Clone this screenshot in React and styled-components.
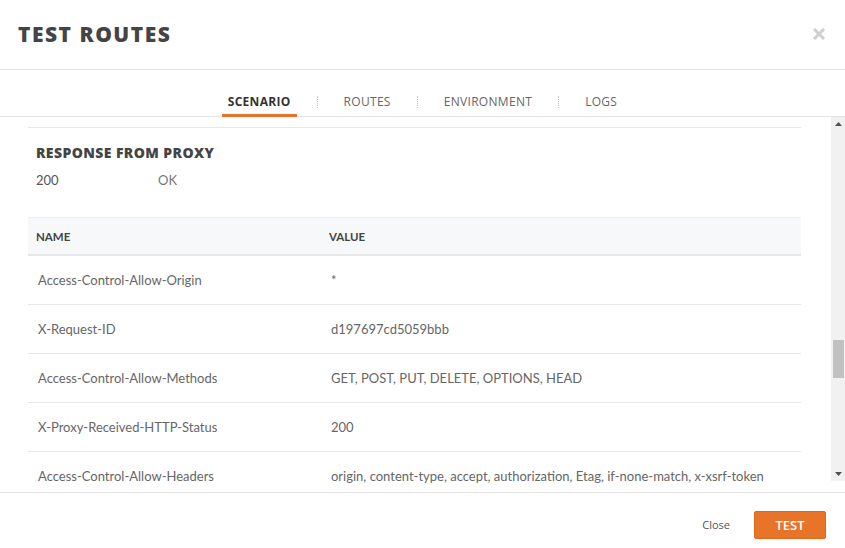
import React from 'react'
import styled, {createGlobalStyle} from 'styled-components'

const GlobalStyle = createGlobalStyle`
  * { box-sizing: border-box; }
  html, body { margin: 0; padding: 0; background: #fff; }
  body { font-family: Lato, "Open Sans", sans-serif; }
`

const tabs = ["Scenario", "Routes", "Environment", "Logs"]

const headers = [
  ["Access-Control-Allow-Origin", "*"],
  ["X-Request-ID", "d197697cd5059bbb"],
  ["Access-Control-Allow-Methods", "GET, POST, PUT, DELETE, OPTIONS, HEAD"],
  ["X-Proxy-Received-HTTP-Status", "200"],
  ["Access-Control-Allow-Headers", "origin, content-type, accept, authorization, Etag, if-none-match, x-xsrf-token"],
]

const App = () => {
  return (
    <Modal>
      <GlobalStyle />
      <Header>
        <Title>TEST ROUTES</Title>
        <CloseX>
          <svg width="12" height="12" viewBox="0 0 12 12">
            <path d="M2 2 L10 10 M10 2 L2 10" stroke="#cfcfcf" strokeWidth="3" strokeLinecap="square" />
          </svg>
        </CloseX>
      </Header>
      <Tabs>
        {tabs.map((t, i) => (
          <React.Fragment key={t}>
            {i > 0 && <TabSep />}
            <Tab active={i === 0}>{t}</Tab>
          </React.Fragment>
        ))}
      </Tabs>
      <Body>
        <Content>
          <PrevEnd />
          <SectionTitle>RESPONSE FROM PROXY</SectionTitle>
          <Status>
            <Code>200</Code>
            <span>OK</span>
          </Status>
          <Table>
            <HeadRow>
              <HeadCell>NAME</HeadCell>
              <HeadCell>VALUE</HeadCell>
            </HeadRow>
            {headers.map(([name, value]) => (
              <Row key={name}>
                <Cell>{name}</Cell>
                <Cell>{value}</Cell>
              </Row>
            ))}
          </Table>
        </Content>
        <Track>
          <Arrow>
            <svg width="7" height="4" viewBox="0 0 7 4"><path d="M0 4 L3.5 0 L7 4 Z" fill="#505050" /></svg>
          </Arrow>
          <Rail>
            <Thumb />
          </Rail>
          <Arrow>
            <svg width="7" height="4" viewBox="0 0 7 4"><path d="M0 0 L3.5 4 L7 0 Z" fill="#505050" /></svg>
          </Arrow>
        </Track>
      </Body>
      <Footer>
        <CloseBtn>Close</CloseBtn>
        <TestBtn>TEST</TestBtn>
      </Footer>
    </Modal>
  )
}

export default App

const Modal = styled.div`
  width: 845px;
  height: 548px;
  display: flex;
  flex-direction: column;
  overflow: hidden;
  background: #fff;
`
const Header = styled.div`
  height: 70px;
  flex-shrink: 0;
  display: flex;
  align-items: center;
  justify-content: space-between;
  padding: 0 20px 2px 18px;
  border-bottom: 1px solid #e4e4e4;
`
const Title = styled.h1`
  margin: 0;
  font-family: "Open Sans", sans-serif;
  font-weight: 800;
  font-size: 21px;
  letter-spacing: 1.5px;
  color: #444;
`
const CloseX = styled.div`
  display: flex;
`
const Tabs = styled.div`
  height: 47px;
  flex-shrink: 0;
  display: flex;
  justify-content: center;
  align-items: flex-end;
  border-bottom: 1px solid #e4e4e4;
`
const Tab = styled.div`
  font-family: "Open Sans", sans-serif;
  font-size: 12px;
  letter-spacing: 0.3px;
  font-weight: ${p => p.active ? 700 : 500};
  text-transform: uppercase;
  color: ${p => p.active ? '#333' : '#666'};
  padding: 0 6px 4px;
  border-bottom: 3px solid ${p => p.active ? '#e8722a' : 'transparent'};
  margin-bottom: -1px;
`
const TabSep = styled.div`
  width: 0;
  height: 12px;
  border-left: 1px dotted #c8c8c8;
  margin: 0 20px 8px;
`
const Body = styled.div`
  height: 376px;
  flex-shrink: 0;
  display: flex;
  border-bottom: 1px solid #e4e4e4;
`
const Content = styled.div`
  flex: 1;
  overflow: hidden;
  padding: 0 30px 0 28px;
`
const PrevEnd = styled.div`
  margin-top: 10px;
  border-top: 1px solid #e8e8e8;
`
const SectionTitle = styled.h2`
  margin: 16px 0 0 8px;
  font-family: "Open Sans", sans-serif;
  font-size: 14px;
  font-weight: 800;
  letter-spacing: 0.4px;
  color: #444;
  line-height: 18px;
`
const Status = styled.div`
  display: flex;
  margin: 10px 0 0 8px;
  font-size: 13px;
  color: #555;
  line-height: 16px;
  span { color: #777; }
`
const Code = styled.div`
  width: 122px;
`
const Table = styled.div`
  margin-top: 29px;
`
const HeadRow = styled.div`
  display: grid;
  grid-template-columns: 293px 1fr;
  height: 39px;
  align-items: center;
  background: #f7f8f9;
  border-top: 1px solid #eceeef;
  border-bottom: 2px solid #e6e8ea;
`
const HeadCell = styled.div`
  padding-left: 8px;
  font-size: 11.5px;
  font-weight: 700;
  color: #444;
`
const Row = styled.div`
  display: grid;
  grid-template-columns: 293px 1fr;
  height: 49px;
  align-items: center;
  border-bottom: 1px solid #e8e8e8;
`
const Cell = styled.div`
  padding-left: 10px;
  padding-top: 0px;
  font-size: 13px;
  color: #666;
  white-space: nowrap;
`
const Track = styled.div`
  width: 14px;
  height: 364px;
  background: #f1f1f1;
  display: flex;
  flex-direction: column;
`
const Arrow = styled.div`
  height: 14px;
  display: flex;
  align-items: center;
  justify-content: center;
`
const Rail = styled.div`
  flex: 1;
  padding: 209px 1px 0 2px;
`
const Thumb = styled.div`
  height: 38px;
  background: #c1c1c1;
`
const Footer = styled.div`
  flex: 1;
  display: flex;
  align-items: center;
  justify-content: flex-end;
  padding: 8px 19px 0 0;
`
const CloseBtn = styled.button`
  border: none;
  background: none;
  font-family: "Open Sans", sans-serif;
  font-size: 11px;
  color: #555;
  margin-right: 24px;
  padding: 0;
`
const TestBtn = styled.button`
  width: 72px;
  height: 28px;
  border: 1px solid #e0681d;
  border-radius: 2px;
  background: #e8742a;
  color: #fff;
  font-family: "Open Sans", sans-serif;
  font-weight: 600;
  font-size: 13px;
  padding: 0;
`
